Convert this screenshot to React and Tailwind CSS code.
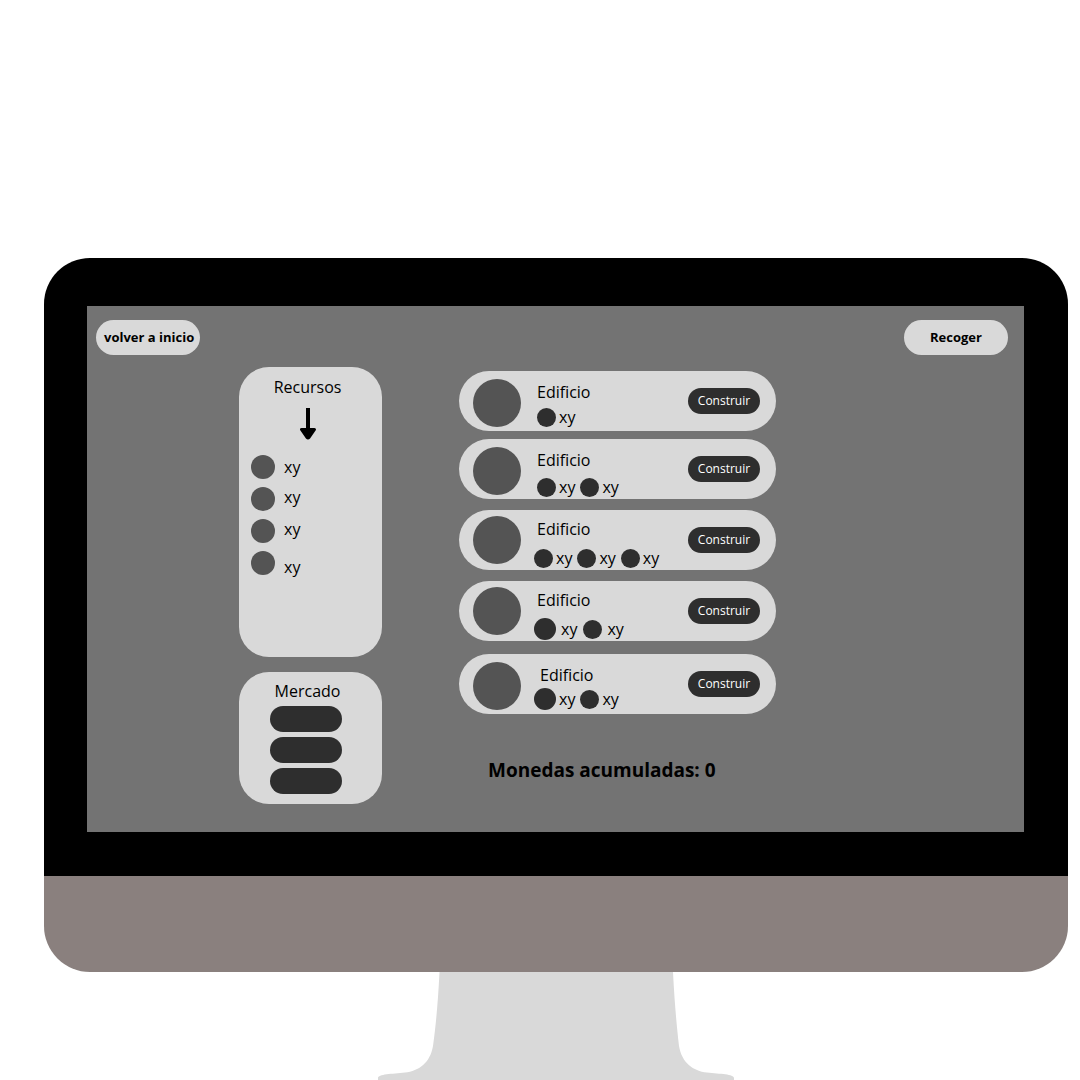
import React from "react";

const resources = [
  { id: 1, align: "items-center", text: "leading-5" },
  { id: 2, align: "items-start", text: "leading-5" },
  { id: 3, align: "items-start", text: "leading-5" },
  { id: 4, align: "items-end", text: "leading-4" },
];

const SMALL = "size-[19px]";
const LARGE = "size-[22px]";

const buildings = [
  {
    id: 1,
    card: "",
    inner: "pt-2 pb-1",
    title: "pl-4",
    row: "mt-px gap-1.5 pl-4",
    costs: [{ dot: SMALL, gap: "gap-[3px]" }],
  },
  {
    id: 2,
    card: "mt-2",
    inner: "pt-2 pb-1",
    title: "pl-4",
    row: "mt-[3px] gap-[5px] pl-4",
    costs: [
      { dot: SMALL, gap: "gap-[3px]" },
      { dot: SMALL, gap: "gap-[3px]" },
    ],
  },
  {
    id: 3,
    card: "mt-[11px]",
    inner: "py-1.5",
    title: "pl-4",
    row: "mt-[5px] gap-[5px] pl-[13px]",
    costs: [
      { dot: SMALL, gap: "gap-[3px]" },
      { dot: SMALL, gap: "gap-[3px]" },
      { dot: SMALL, gap: "gap-[3px]" },
    ],
  },
  {
    id: 4,
    card: "mt-[11px]",
    inner: "py-1.5",
    title: "pl-4",
    row: "mt-[5px] gap-1.5 pl-[13px]",
    costs: [
      { dot: LARGE, gap: "gap-[5px]" },
      { dot: SMALL, gap: "gap-[5px]" },
    ],
  },
  {
    id: 5,
    card: "mt-[13px]",
    inner: "pt-2 pb-1",
    title: "pl-[19px]",
    row: "gap-[5px] pl-[13px]",
    costs: [
      { dot: LARGE, gap: "gap-[3px]" },
      { dot: SMALL, gap: "gap-[3px]" },
    ],
  },
];

function DownArrow() {
  return (
    <svg className="mt-[9px] h-8 w-4" viewBox="0 0 16 32" aria-hidden="true">
      <path d="M8 0V22" stroke="#000" strokeWidth="4" />
      <path
        d="M1.500 21.500H14.500L9 29.500Q8 30.500 7 29.500Z"
        fill="#000"
        stroke="#000"
        strokeWidth="3"
        strokeLinejoin="round"
      />
    </svg>
  );
}

function ResourcesPanel() {
  return (
    <section className="flex h-[290px] flex-col items-center rounded-[30px] bg-[#d9d9d9] pt-2 pr-1.5">
      <h2 className="text-base leading-6">Recursos</h2>
      <DownArrow />
      <ul className="mt-[15px] flex flex-col gap-2 self-start pl-3">
        {resources.map((r) => (
          <li key={r.id} className={"flex gap-[9px] " + r.align}>
            <span className="size-6 rounded-full bg-[#545454]" />
            <span className={"text-base " + r.text}>xy</span>
          </li>
        ))}
      </ul>
    </section>
  );
}

function MarketPanel() {
  return (
    <section className="flex h-[132px] flex-col items-center rounded-[30px] bg-[#d9d9d9] pt-[7px] pr-1.5">
      <h2 className="text-base leading-6">Mercado</h2>
      <div className="mt-[3px] flex flex-col gap-[5px] self-start pl-[31px]">
        {[1, 2, 3].map((n) => (
          <button
            key={n}
            type="button"
            aria-label={"Mercado " + n}
            className="h-[26px] w-[72px] rounded-full bg-[#2e2e2e]"
          />
        ))}
      </div>
    </section>
  );
}

function BuildingCard({ building }) {
  return (
    <article
      className={
        "flex items-center rounded-[30px] bg-[#d9d9d9] pr-4 pl-3.5 " +
        building.card
      }
    >
      <div className={"flex flex-1 " + building.inner}>
        <span className="size-12 shrink-0 rounded-full bg-[#545454]" />
        <div className="flex h-12 flex-1 flex-col">
          <h3
            className={"shrink-0 text-base leading-[26px] " + building.title}
          >
            Edificio
          </h3>
          <ul
            className={"flex h-[22px] shrink-0 items-center " + building.row}
          >
            {building.costs.map((c, i) => (
              <li key={i} className={"flex items-center " + c.gap}>
                <span className={"rounded-full bg-[#2e2e2e] " + c.dot} />
                <span className="text-base leading-[22px]">xy</span>
              </li>
            ))}
          </ul>
        </div>
      </div>
      <button
        type="button"
        className="h-[26px] w-[72px] rounded-full bg-[#2e2e2e] text-xs text-white"
      >
        Construir
      </button>
    </article>
  );
}

export default function App() {
  return (
    <main className="min-h-screen overflow-hidden bg-white pt-[258px] pr-3 pl-11 font-['Open_Sans',sans-serif] text-black">
      <div className="rounded-t-[46px] bg-black pt-12 pr-11 pb-11 pl-[43px]">
        <div className="bg-[#737373] pb-7">
          <header className="flex justify-between pt-3.5 pr-4 pl-[9px]">
            <button
              type="button"
              className="h-[35px] w-[104px] rounded-full bg-[#d9d9d9] pl-2 text-left text-[13px] font-bold whitespace-nowrap"
            >
              volver a inicio
            </button>
            <button
              type="button"
              className="h-[35px] w-[104px] rounded-full bg-[#d9d9d9] text-[13px] font-bold"
            >
              Recoger
            </button>
          </header>
          <div className="flex gap-[77px] pt-3 pl-[152px]">
            <div className="flex w-[143px] flex-col gap-[15px]">
              <ResourcesPanel />
              <MarketPanel />
            </div>
            <div className="flex w-[317px] flex-col pt-1">
              {buildings.map((b) => (
                <BuildingCard key={b.id} building={b} />
              ))}
              <p className="mt-[42px] pl-[29px] text-[19px] leading-7 font-bold">
                Monedas acumuladas: 0
              </p>
            </div>
          </div>
        </div>
      </div>
      <div className="h-24 rounded-b-[46px] bg-[#8a807e]" />
      <svg
        className="mx-auto h-[108px] w-[356px]"
        viewBox="0 0 356 108"
        aria-hidden="true"
      >
        <path
          d="M61.500 0H295C296.500 30 298.500 52 301 74C304 91 315 99 329 100.500C342 102 356 102 356 106V108H0V106C0 102 14 102 27 100.500C41 99 52 91 55 74C58 52 60 30 61.500 0Z"
          fill="#d9d9d9"
        />
      </svg>
    </main>
  );
}
